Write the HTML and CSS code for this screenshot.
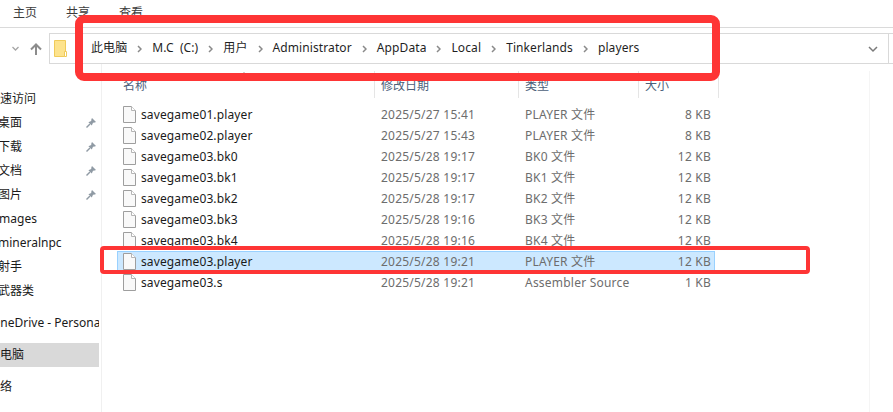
FILE: index.html
```html
<!DOCTYPE html>
<html lang="zh-CN">
<head>
<meta charset="utf-8">
<title>players</title>
<link rel="stylesheet" href="styles.css">
</head>
<body>
<svg class="defs" width="0" height="0" aria-hidden="true">
  <symbol id="file" viewBox="0 0 13 17">
    <path d="M.5.5H8.500L12.500 4.500V16.500H.5Z" fill="#f9f9f9" stroke="#9e9e9e"/>
    <path d="M8.500.5V4.500H12.500" fill="#fff" stroke="#b5b5b5"/>
  </symbol>
  <symbol id="pin" viewBox="0 0 12 12">
    <path d="M7 1 11 5 9.800 5.600 8 5.800 6.800 8.600 3.400 5.200 6.200 4 6.400 2.200Z" fill="#8f9aa4"/>
    <path d="M5 7 1.500 10.500" stroke="#8f9aa4" stroke-width="1.400" fill="none"/>
  </symbol>
  <symbol id="sep" viewBox="0 0 5 8">
    <path d="M1 1 4 4 1 7" fill="none" stroke="#8a8a8a" stroke-width="1.500"/>
  </symbol>
</svg>

<header class="ribbon">
  <span class="tab">主页</span>
  <span class="tab">共享</span>
  <span class="tab">查看</span>
</header>

<nav class="toolbar">
  <svg class="nav-chevron" width="7" height="5" viewBox="0 0 7 5"><path d="M.5 1 3.500 4 6.500 1" fill="none" stroke="#a6a6a6" stroke-width="1.300"/></svg>
  <svg class="nav-up" width="12" height="12" viewBox="0 0 12 12"><path d="M6 12V1.500M1 6.500 6 1.500 11 6.500" fill="none" stroke="#8c8c8c" stroke-width="2"/></svg>
  <div class="address">
    <svg class="folder" width="13" height="17" viewBox="0 0 13 17">
      <path d="M.5.5H11.500V16.500H.5Z" fill="#fde38d" stroke="#f0cb5a"/>
      <path d="M10.500 11.500H12.500V16.500H10.500Z" fill="#fff" stroke="#f0cb5a"/>
    </svg>
    <ol class="crumbs">
      <li>此电脑</li>
      <li class="sep"><svg width="5" height="8"><use href="#sep"/></svg></li>
      <li>M.C (C:)</li>
      <li class="sep"><svg width="5" height="8"><use href="#sep"/></svg></li>
      <li>用户</li>
      <li class="sep"><svg width="5" height="8"><use href="#sep"/></svg></li>
      <li>Administrator</li>
      <li class="sep"><svg width="5" height="8"><use href="#sep"/></svg></li>
      <li>AppData</li>
      <li class="sep"><svg width="5" height="8"><use href="#sep"/></svg></li>
      <li>Local</li>
      <li class="sep"><svg width="5" height="8"><use href="#sep"/></svg></li>
      <li>Tinkerlands</li>
      <li class="sep"><svg width="5" height="8"><use href="#sep"/></svg></li>
      <li>players</li>
    </ol>
    <svg class="addr-chevron" width="10" height="7" viewBox="0 0 10 7"><path d="M1 1 5 5 9 1" fill="none" stroke="#7a7a7a" stroke-width="1.500"/></svg>
  </div>
</nav>

<main class="body">
  <aside class="sidebar">
    <ul class="tree quick">
      <li class="top">快速访问</li>
      <li class="sub"><span>桌面</span><svg class="pin" width="12" height="12"><use href="#pin"/></svg></li>
      <li class="sub"><span>下载</span><svg class="pin" width="12" height="12"><use href="#pin"/></svg></li>
      <li class="sub"><span>文档</span><svg class="pin" width="12" height="12"><use href="#pin"/></svg></li>
      <li class="sub"><span>图片</span><svg class="pin" width="12" height="12"><use href="#pin"/></svg></li>
      <li class="sub"><span class="images">Images</span></li>
      <li class="sub"><span>mineralnpc</span></li>
      <li class="sub"><span>射手</span></li>
      <li class="sub"><span>武器类</span></li>
    </ul>
    <ul class="tree roots">
      <li class="top drive">OneDrive - Personal</li>
      <li class="top current">此电脑</li>
      <li class="top">网络</li>
    </ul>
  </aside>

  <section class="files">
    <div class="col-head">
      <span class="sort-caret"></span>
      <span class="head-cell">名称</span>
      <span class="head-cell">修改日期</span>
      <span class="head-cell">类型</span>
      <span class="head-cell">大小</span>
    </div>
    <div class="rows">
      <div class="row"><span class="name"><svg width="13" height="17"><use href="#file"/></svg>savegame01.player</span><span>2025/5/27 15:41</span><span>PLAYER 文件</span><span class="size">8 KB</span></div>
      <div class="row"><span class="name"><svg width="13" height="17"><use href="#file"/></svg>savegame02.player</span><span>2025/5/27 15:43</span><span>PLAYER 文件</span><span class="size">8 KB</span></div>
      <div class="row"><span class="name"><svg width="13" height="17"><use href="#file"/></svg>savegame03.bk0</span><span>2025/5/28 19:17</span><span>BK0 文件</span><span class="size">12 KB</span></div>
      <div class="row"><span class="name"><svg width="13" height="17"><use href="#file"/></svg>savegame03.bk1</span><span>2025/5/28 19:17</span><span>BK1 文件</span><span class="size">12 KB</span></div>
      <div class="row"><span class="name"><svg width="13" height="17"><use href="#file"/></svg>savegame03.bk2</span><span>2025/5/28 19:17</span><span>BK2 文件</span><span class="size">12 KB</span></div>
      <div class="row"><span class="name"><svg width="13" height="17"><use href="#file"/></svg>savegame03.bk3</span><span>2025/5/28 19:16</span><span>BK3 文件</span><span class="size">12 KB</span></div>
      <div class="row"><span class="name"><svg width="13" height="17"><use href="#file"/></svg>savegame03.bk4</span><span>2025/5/28 19:16</span><span>BK4 文件</span><span class="size">12 KB</span></div>
      <div class="row selected"><span class="name"><svg width="13" height="17"><use href="#file"/></svg>savegame03.player</span><span>2025/5/28 19:21</span><span>PLAYER 文件</span><span class="size">12 KB</span></div>
      <div class="row"><span class="name"><svg width="13" height="17"><use href="#file"/></svg>savegame03.s</span><span>2025/5/28 19:21</span><span>Assembler Source</span><span class="size">1 KB</span></div>
    </div>
  </section>
  <div class="pane-edge"></div>
</main>

<div class="mark mark-address"></div>
<div class="mark mark-row"></div>
</body>
</html>
```

FILE: styles.css
```css
* { box-sizing: border-box; }
html, body { margin: 0; height: 100%; }
body {
  width: 893px;
  height: 412px;
  overflow: hidden;
  position: relative;
  background: #fff;
  color: #1a1a1a;
  font: 12px/16px "Noto Sans", "Noto Sans CJK SC", sans-serif;
  display: flex;
  flex-direction: column;
}
.defs { position: absolute; }
ul, ol { list-style: none; margin: 0; padding: 0; }

.ribbon {
  height: 28px;
  border-bottom: 1px solid #dadada;
  display: flex;
  gap: 29px;
  padding: 5px 0 0 13px;
  color: #3c3c3c;
}

.toolbar {
  height: 36px;
  padding-top: 5px;
  display: flex;
  align-items: flex-start;
}
.nav-chevron { margin: 13px 0 0 12px; }
.nav-up { margin: 10px 0 0 11px; }
.address {
  margin-left: 7px;
  flex: 1;
  height: 31px;
  border: solid #d9d9d9;
  border-width: 1px 0 1px 1px;
  display: flex;
  align-items: center;
  padding-left: 4px;
  position: relative;
}
.folder { flex: none; }
.crumbs {
  display: flex;
  align-items: center;
  gap: 10px;
  margin: -2px 0 0 24px;
  color: #1f1f1f;
  white-space: nowrap;
  letter-spacing: .1px;
  word-spacing: 3px;
}
.crumbs .sep { display: flex; margin-top: 2px; }
.addr-chevron { position: absolute; left: 818px; top: 12px; }
.address::after {
  content: "";
  position: absolute;
  left: 838px;
  top: 0;
  bottom: 0;
  border-left: 1px solid #d9d9d9;
}

.body { flex: 1; display: flex; min-height: 0; position: relative; }
.sidebar {
  width: 102px;
  flex: none;
  border-right: 1px solid #f0f0f0;
  overflow: hidden;
  padding-top: 23px;
}
.tree li {
  height: 24px;
  width: 99px;
  display: flex;
  align-items: center;
  white-space: nowrap;
  position: relative;
  overflow: hidden;
}
.top { text-indent: -12px; }
.top.drive { text-indent: -9px; }
.sub span { margin-left: -2px; }
.sub .images { margin-left: -5px; }
.pin { position: absolute; left: 85px; top: 6px; }
.roots { margin-top: 8px; }
.tree.roots li + li { margin-top: 8px; }
.current { background: #d9d9d9; }

.files { flex: none; width: 616px; margin-left: 15px; padding-top: 7px; }
.col-head {
  display: grid;
  grid-template-columns: 258px 144px 120px 80px;
  height: 27px;
  position: relative;
  color: #4c607a;
}
.head-cell {
  padding: 7px 0 0 3px;
  border-right: 1px solid #e5e5e5;
}
.head-cell:nth-of-type(n+2) { padding-left: 6px; }
.sort-caret {
  position: absolute;
  left: 124px;
  top: 1px;
  width: 0;
  height: 0;
  border: 3px solid transparent;
  border-top: 0;
  border-bottom-color: #a0a0a0;
}
.rows { margin-top: 6px; width: 598px; }
.row {
  display: grid;
  grid-template-columns: 257px 144px 120px 77px;
  height: 21px;
  align-items: center;
  color: #6d6d6d;
}
.row > span:not(.name) { padding-left: 7px; white-space: nowrap; letter-spacing: .22px; }
.name {
  display: flex;
  align-items: center;
  gap: 5px;
  padding-left: 6px;
  color: #1a1a1a;
  letter-spacing: .12px;
}
.row .size { text-align: right; padding: 0 4px 0 0; }
.selected { background: #cce8ff; outline: 1px solid #99d1ff; outline-offset: -1px; }
.pane-edge {
  margin: 7px 0 0 136px;
  width: 1px;
  background: #f5f5f5;
}

.mark { position: absolute; border-style: solid; border-color: #fe3535; }
.mark-address { left: 75px; top: 15px; width: 645px; height: 66px; border-width: 8px; border-radius: 9px; }
.mark-row { left: 100px; top: 246px; width: 710px; height: 28px; border-width: 4px; border-radius: 4px; }
```
